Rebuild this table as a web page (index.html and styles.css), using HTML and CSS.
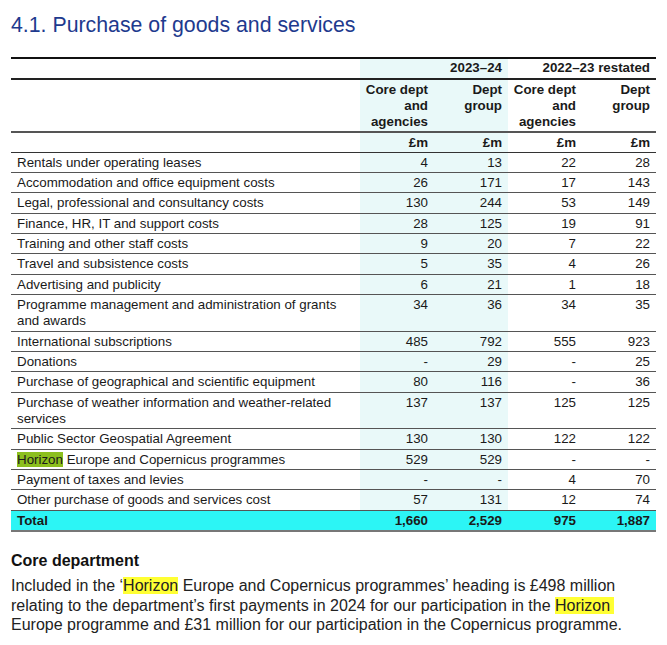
FILE: index.html
```html
<!DOCTYPE html>
<html>
<head>
<meta charset="utf-8">
<link rel="stylesheet" href="styles.css">
</head>
<body>
<div class="page">
  <h1 class="title">4.1. Purchase of goods and services</h1>
  <table class="fin">
    <colgroup>
      <col class="c-label"><col class="c-num"><col class="c-num"><col class="c-num"><col class="c-num">
    </colgroup>
    <thead>
      <tr class="year-row">
        <th class="lbl"></th>
        <th class="sh"></th>
        <th class="sh">2023–24</th>
        <th colspan="2">2022–23 restated</th>
      </tr>
      <tr class="sub-row">
        <th class="lbl"></th>
        <th class="sh">Core dept<br>and<br>agencies</th>
        <th class="sh">Dept<br>group</th>
        <th>Core dept<br>and<br>agencies</th>
        <th>Dept<br>group</th>
      </tr>
      <tr class="unit-row">
        <th class="lbl"></th>
        <th class="sh">£m</th>
        <th class="sh">£m</th>
        <th>£m</th>
        <th>£m</th>
      </tr>
    </thead>
    <tbody>
      <tr><td class="lbl">Rentals under operating leases</td><td class="sh">4</td><td class="sh">13</td><td>22</td><td>28</td></tr>
      <tr><td class="lbl">Accommodation and office equipment costs</td><td class="sh">26</td><td class="sh">171</td><td>17</td><td>143</td></tr>
      <tr><td class="lbl">Legal, professional and consultancy costs</td><td class="sh">130</td><td class="sh">244</td><td>53</td><td>149</td></tr>
      <tr><td class="lbl">Finance, HR, IT and support costs</td><td class="sh">28</td><td class="sh">125</td><td>19</td><td>91</td></tr>
      <tr><td class="lbl">Training and other staff costs</td><td class="sh">9</td><td class="sh">20</td><td>7</td><td>22</td></tr>
      <tr><td class="lbl">Travel and subsistence costs</td><td class="sh">5</td><td class="sh">35</td><td>4</td><td>26</td></tr>
      <tr><td class="lbl">Advertising and publicity</td><td class="sh">6</td><td class="sh">21</td><td>1</td><td>18</td></tr>
      <tr><td class="lbl">Programme management and administration of grants and awards</td><td class="sh">34</td><td class="sh">36</td><td>34</td><td>35</td></tr>
      <tr><td class="lbl">International subscriptions</td><td class="sh">485</td><td class="sh">792</td><td>555</td><td>923</td></tr>
      <tr><td class="lbl">Donations</td><td class="sh">-</td><td class="sh">29</td><td>-</td><td>25</td></tr>
      <tr><td class="lbl">Purchase of geographical and scientific equipment</td><td class="sh">80</td><td class="sh">116</td><td>-</td><td>36</td></tr>
      <tr><td class="lbl">Purchase of weather information and weather-related services</td><td class="sh">137</td><td class="sh">137</td><td>125</td><td>125</td></tr>
      <tr><td class="lbl">Public Sector Geospatial Agreement</td><td class="sh">130</td><td class="sh">130</td><td>122</td><td>122</td></tr>
      <tr><td class="lbl"><span class="hl-green">Horizon</span> Europe and Copernicus programmes</td><td class="sh">529</td><td class="sh">529</td><td>-</td><td>-</td></tr>
      <tr><td class="lbl">Payment of taxes and levies</td><td class="sh">-</td><td class="sh">-</td><td>4</td><td>70</td></tr>
      <tr><td class="lbl">Other purchase of goods and services cost</td><td class="sh">57</td><td class="sh">131</td><td>12</td><td>74</td></tr>
      <tr class="total"><td class="lbl">Total</td><td>1,660</td><td>2,529</td><td>975</td><td>1,887</td></tr>
    </tbody>
  </table>
  <h2 class="sub">Core department</h2>
  <p class="note">Included in the ‘<span class="hl-yellow">Horizon</span> Europe and Copernicus programmes’ heading is £498 million relating to the department’s first payments in 2024 for our participation in the <span class="hl-yellow hl-tail">Horizon</span> Europe programme and £31 million for our participation in the Copernicus programme.</p>
</div>
</body>
</html>
```
FILE: styles.css
```css
html, body {
  margin: 0;
  padding: 0;
  background: #ffffff;
}
.page {
  padding: 0 10px 0 11px;
  font-family: "Liberation Sans", Arial, sans-serif;
  color: #1a1a1a;
}
.title {
  margin: 0;
  padding-top: 13px;
  font-size: 21.3px;
  line-height: 25px;
  font-weight: normal;
  color: #1e3a8e;
}
.fin {
  margin-top: 19px;
  width: 645px;
  border-collapse: collapse;
  font-size: 13.33px;
  line-height: 16px;
}
.c-label { width: 349px; }
.c-num { width: 74px; }
.fin th, .fin td {
  padding: 2px 6px 1.4px 6px;
  text-align: right;
  vertical-align: top;
  border-bottom: 1px solid #555;
}
.fin th {
  font-weight: bold;
  white-space: nowrap;
  padding-left: 2px;
}
.fin .lbl { text-align: left; }
.fin .sh { background: #e9f9f9; }
.year-row th {
  border-top: 2px solid #111;
  border-bottom: 2px solid #222;
  padding-top: 1px;
  padding-bottom: 2px;
}
.sub-row th {
  border-bottom: 2px solid #555;
  padding-top: 2px;
  padding-bottom: 1px;
}
.unit-row th {
  border-bottom: 1px solid #333;
  padding-top: 1.5px;
  padding-bottom: 1px;
}
.total td {
  background: #2cf5f5;
  font-weight: bold;
  border-bottom: 2px solid #777;
}
.hl-green { background: #8cbf1e; }
.hl-yellow { background: #ffff33; }
.hl-tail { padding-right: 4px; }
.sub {
  margin: 19px 0 0 0;
  font-size: 16px;
  line-height: 20px;
  font-weight: bold;
  color: #111;
}
.note {
  margin: 5px 0 0 0;
  font-size: 16px;
  line-height: 19.6px;
  color: #222;
}
```
